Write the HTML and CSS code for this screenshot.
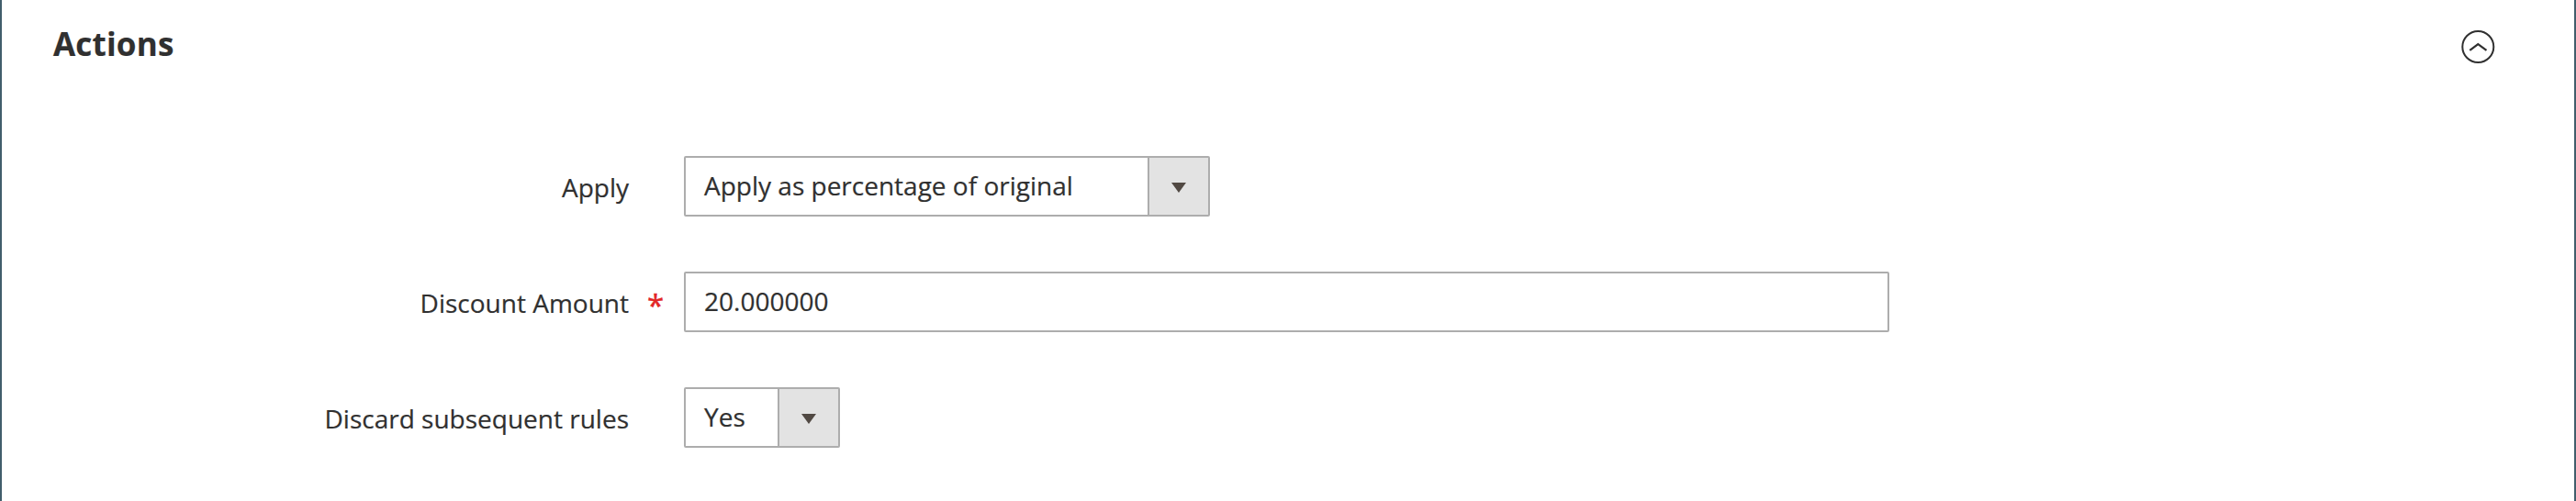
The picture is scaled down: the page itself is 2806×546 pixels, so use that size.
FILE: index.html
```html
<!DOCTYPE html>
<html lang="en">
<head>
<meta charset="utf-8">
<title>Actions</title>
<link rel="stylesheet" href="styles.css">
</head>
<body>
<section class="panel">
  <header class="panel-header">
    <h2 class="panel-title">Actions</h2>
    <svg class="collapse-icon" viewBox="0 0 38 38" fill="none" stroke="currentColor">
      <circle cx="19.3" cy="19" r="17" stroke-width="2"/>
      <path d="M10.3 22.8 19.3 16l9.2 6.8" stroke-width="2.2"/>
    </svg>
  </header>
  <div class="fields">
    <div class="field">
      <label class="label">Apply</label>
      <span class="required"></span>
      <div class="select select-wide">
        <span class="value">Apply as percentage of original</span>
        <span class="toggle"><svg class="arrow" viewBox="0 0 16 11"><path d="M0 0h16L8 11z"/></svg></span>
      </div>
    </div>
    <div class="field">
      <label class="label">Discount Amount</label>
      <span class="required">*</span>
      <div class="input"><span class="value">20.000000</span></div>
    </div>
    <div class="field">
      <label class="label">Discard subsequent rules</label>
      <span class="required"></span>
      <div class="select select-narrow">
        <span class="value">Yes</span>
        <span class="toggle"><svg class="arrow" viewBox="0 0 16 11"><path d="M0 0h16L8 11z"/></svg></span>
      </div>
    </div>
  </div>
</section>
</body>
</html>
```
FILE: styles.css
```css
* { box-sizing: border-box; }
body {
  margin: 0;
  color: #303030;
  font: 400 28px/38px "Open Sans", sans-serif;
  -webkit-text-stroke: 0.2px currentColor;
}
.panel {
  height: 546px;
  overflow: hidden;
  background: #fff;
  border: solid #415e6b;
  border-width: 0 2px;
}
.panel-header {
  display: flex;
  align-items: center;
  justify-content: space-between;
  height: 102px;
  padding: 0 86px 0 56px;
}
.panel-title {
  margin: 0;
  padding-bottom: 6px;
  font-size: 35px;
  line-height: 46px;
  font-weight: 700;
  letter-spacing: 0.2px;
}
.collapse-icon { width: 38px; height: 38px; }
.fields {
  display: flex;
  flex-direction: column;
  gap: 60px;
  padding-top: 68px;
}
.field {
  display: grid;
  grid-template-columns: 683px 60px auto;
  justify-content: start;
  height: 66px;
}
.label { padding-top: 15px; text-align: right; }
.required {
  padding: 18px 0 0 20px;
  color: #e22626;
  font-size: 33px;
  -webkit-text-stroke: 0.5px currentColor;
}
.select, .input {
  display: flex;
  height: 66px;
  background: #fff;
  border: 2px solid #adadad;
  border-radius: 2px;
}
.select-wide { width: 573px; }
.select-narrow { width: 170px; }
.input { width: 1313px; }
.value {
  flex: 1;
  padding: 11px 0 0 20px;
  white-space: nowrap;
}
.toggle {
  display: flex;
  width: 66px;
  padding: 27px 0 0 24px;
  background: #e3e3e3;
  border-left: 2px solid #adadad;
}
.arrow { width: 16px; height: 11px; fill: #514943; }
```
